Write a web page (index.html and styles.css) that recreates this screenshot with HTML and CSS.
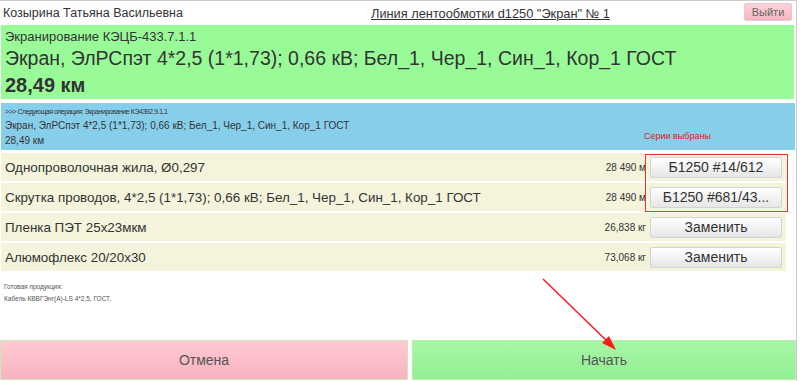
FILE: index.html
```html
<!DOCTYPE html>
<html lang="ru">

<head>
    <meta charset="UTF-8">
    <meta name="viewport" content="width=device-width, initial-scale=1.0">
    <title>Линия лентообмотки</title>
    <link rel="stylesheet" href="styles.css">
</head>

<body>
    <div id="page">
        <div class="header">
            <span class="operator">Козырина Татьяна Васильевна</span>
            <a class="line-title" href="#">Линия лентообмотки d1250 "Экран" № 1</a>
            <button class="exit-btn">Выйти</button>
        </div>

        <div class="current-op">
            <div class="op-code">Экранирование КЭЦБ-433.7.1.1</div>
            <div class="op-name">Экран, ЭлРСпэт 4*2,5 (1*1,73); 0,66 кВ; Бел_1, Чер_1, Син_1, Кор_1 ГОСТ</div>
            <div class="op-amount">28,49 км</div>
        </div>

        <div class="next-op">
            <div class="next-code">&gt;&gt;&gt; Следующая операция: Экранирование КЭ4392.9.1.1</div>
            <div class="next-name">Экран, ЭлРСпэт 4*2,5 (1*1,73); 0,66 кВ; Бел_1, Чер_1, Син_1, Кор_1 ГОСТ</div>
            <div class="next-amount">28,49 км</div>
            <span class="series-note">Серии выбраны</span>
        </div>

        <div id="materials">
            <div class="row">
                <span class="row-name">Однопроволочная жила, Ø0,297</span>
                <span class="row-qty">28 490 м</span>
                <button class="row-btn">Б1250 #14/612</button>
            </div>
            <div class="row">
                <span class="row-name">Скрутка проводов, 4*2,5 (1*1,73); 0,66 кВ; Бел_1, Чер_1, Син_1, Кор_1 ГОСТ</span>
                <span class="row-qty">28 490 м</span>
                <button class="row-btn">Б1250 #681/43...</button>
            </div>
            <div class="row">
                <span class="row-name">Пленка ПЭТ 25x23мкм</span>
                <span class="row-qty">26,838 кг</span>
                <button class="row-btn">Заменить</button>
            </div>
            <div class="row">
                <span class="row-name">Алюмофлекс 20/20x30</span>
                <span class="row-qty">73,068 кг</span>
                <button class="row-btn">Заменить</button>
            </div>
            <div class="picked-box"></div>
        </div>

        <div class="product">
            <div>Готовая продукция:</div>
            <div>Кабель КВВГЭнг(А)-LS 4*2,5, ГОСТ,</div>
        </div>

        <div class="actions">
            <button class="cancel-btn">Отмена</button>
            <button class="start-btn">Начать</button>
        </div>

        <svg class="arrow" width="800" height="381" viewBox="0 0 800 381">
            <line x1="543" y1="279" x2="609" y2="343" stroke="#ff1a1a" stroke-width="1.5" />
            <polygon points="616,350 602,343 609,336" fill="#ff1a1a" />
        </svg>
    </div>
</body>

</html>
```

FILE: styles.css
```css
body {
    margin: 0;
    font-family: "Liberation Sans", Arial, sans-serif;
    color: #333;
    background: #fff;
}

#page {
    position: relative;
    width: 796px;
    height: 380px;
    border-top: 1px solid #ccc;
    border-right: 1px solid #ccc;
    display: flex;
    flex-direction: column;
    overflow: hidden;
}

.header {
    height: 24px;
    display: flex;
    align-items: center;
    padding: 0 3px 0 3px;
}

.operator {
    font-size: 12.5px;
    width: 368px;
}

.line-title {
    font-size: 12.8px;
    color: #333;
    text-decoration: underline;
}

.exit-btn {
    margin-left: auto;
    margin-right: 1px;
    width: 48px;
    height: 18px;
    margin-top: -2px;
    padding: 0;
    font-family: inherit;
    font-size: 11px;
    color: #666;
    background: linear-gradient(#fdd3da, #f4b6c1);
    border: 1px solid #e8c8cc;
    border-radius: 2px;
}

.current-op {
    margin: 0 2px 0 1px;
    height: 74px;
    background: #98fb98;
    padding: 4px 4px 0 4px;
    box-sizing: border-box;
}

.op-code {
    font-size: 13px;
    line-height: 15px;
}

.op-name {
    font-size: 19.5px;
    line-height: 28px;
}

.op-amount {
    font-size: 20px;
    font-weight: bold;
    line-height: 26px;
}

.next-op {
    position: relative;
    margin: 4px 1px 0 1px;
    height: 47px;
    background: #87ceeb;
    padding: 3px 4px 0 4px;
    box-sizing: border-box;
}

.next-code {
    font-size: 7px;
    letter-spacing: -0.45px;
    line-height: 12px;
}

.next-name,
.next-amount {
    font-size: 10px;
    line-height: 15px;
}

.series-note {
    position: absolute;
    left: 643px;
    top: 28px;
    font-size: 9px;
    color: #e01a1a;
}

#materials {
    position: relative;
    margin-top: 3px;
    width: 786px;
}

.row {
    margin: 0 0 2px 1px;
    height: 28px;
    background: #f4f4dc;
    display: flex;
    align-items: center;
    padding: 0 4px 0 4px;
}

.row-name {
    font-size: 13.4px;
    flex: 1;
}

.row-qty {
    font-size: 10px;
    margin-right: 4px;
}

.row-btn {
    width: 132px;
    height: 21px;
    padding: 0;
    font-family: inherit;
    font-size: 14px;
    color: #333;
    background: linear-gradient(#ffffff, #e6e6e6);
    border: 1px solid #d4d4d4;
    border-radius: 2px;
}

.picked-box {
    position: absolute;
    left: 645px;
    top: 1px;
    width: 141px;
    height: 56px;
    border: 1px solid #f03030;
}

.product {
    margin-top: 8px;
    padding-left: 4px;
    font-size: 6.5px;
    line-height: 12px;
    color: #555;
}

.actions {
    margin-top: auto;
    margin-bottom: 1px;
    display: flex;
    gap: 4px;
    height: 40px;
}

.cancel-btn,
.start-btn {
    font-family: inherit;
    font-size: 14px;
    color: #555;
    border-radius: 1px;
    padding: 0;
}

.cancel-btn {
    width: 408px;
    background: linear-gradient(#ffc9d2, #f7b3c1);
    border: 1px solid #cde8b8;
}

.start-btn {
    flex: 1;
    background: linear-gradient(#a6f7a6, #94ef94);
    border: 1px solid #bde8b0;
}

.arrow {
    position: absolute;
    left: 0;
    top: -1px;
    pointer-events: none;
}
```
